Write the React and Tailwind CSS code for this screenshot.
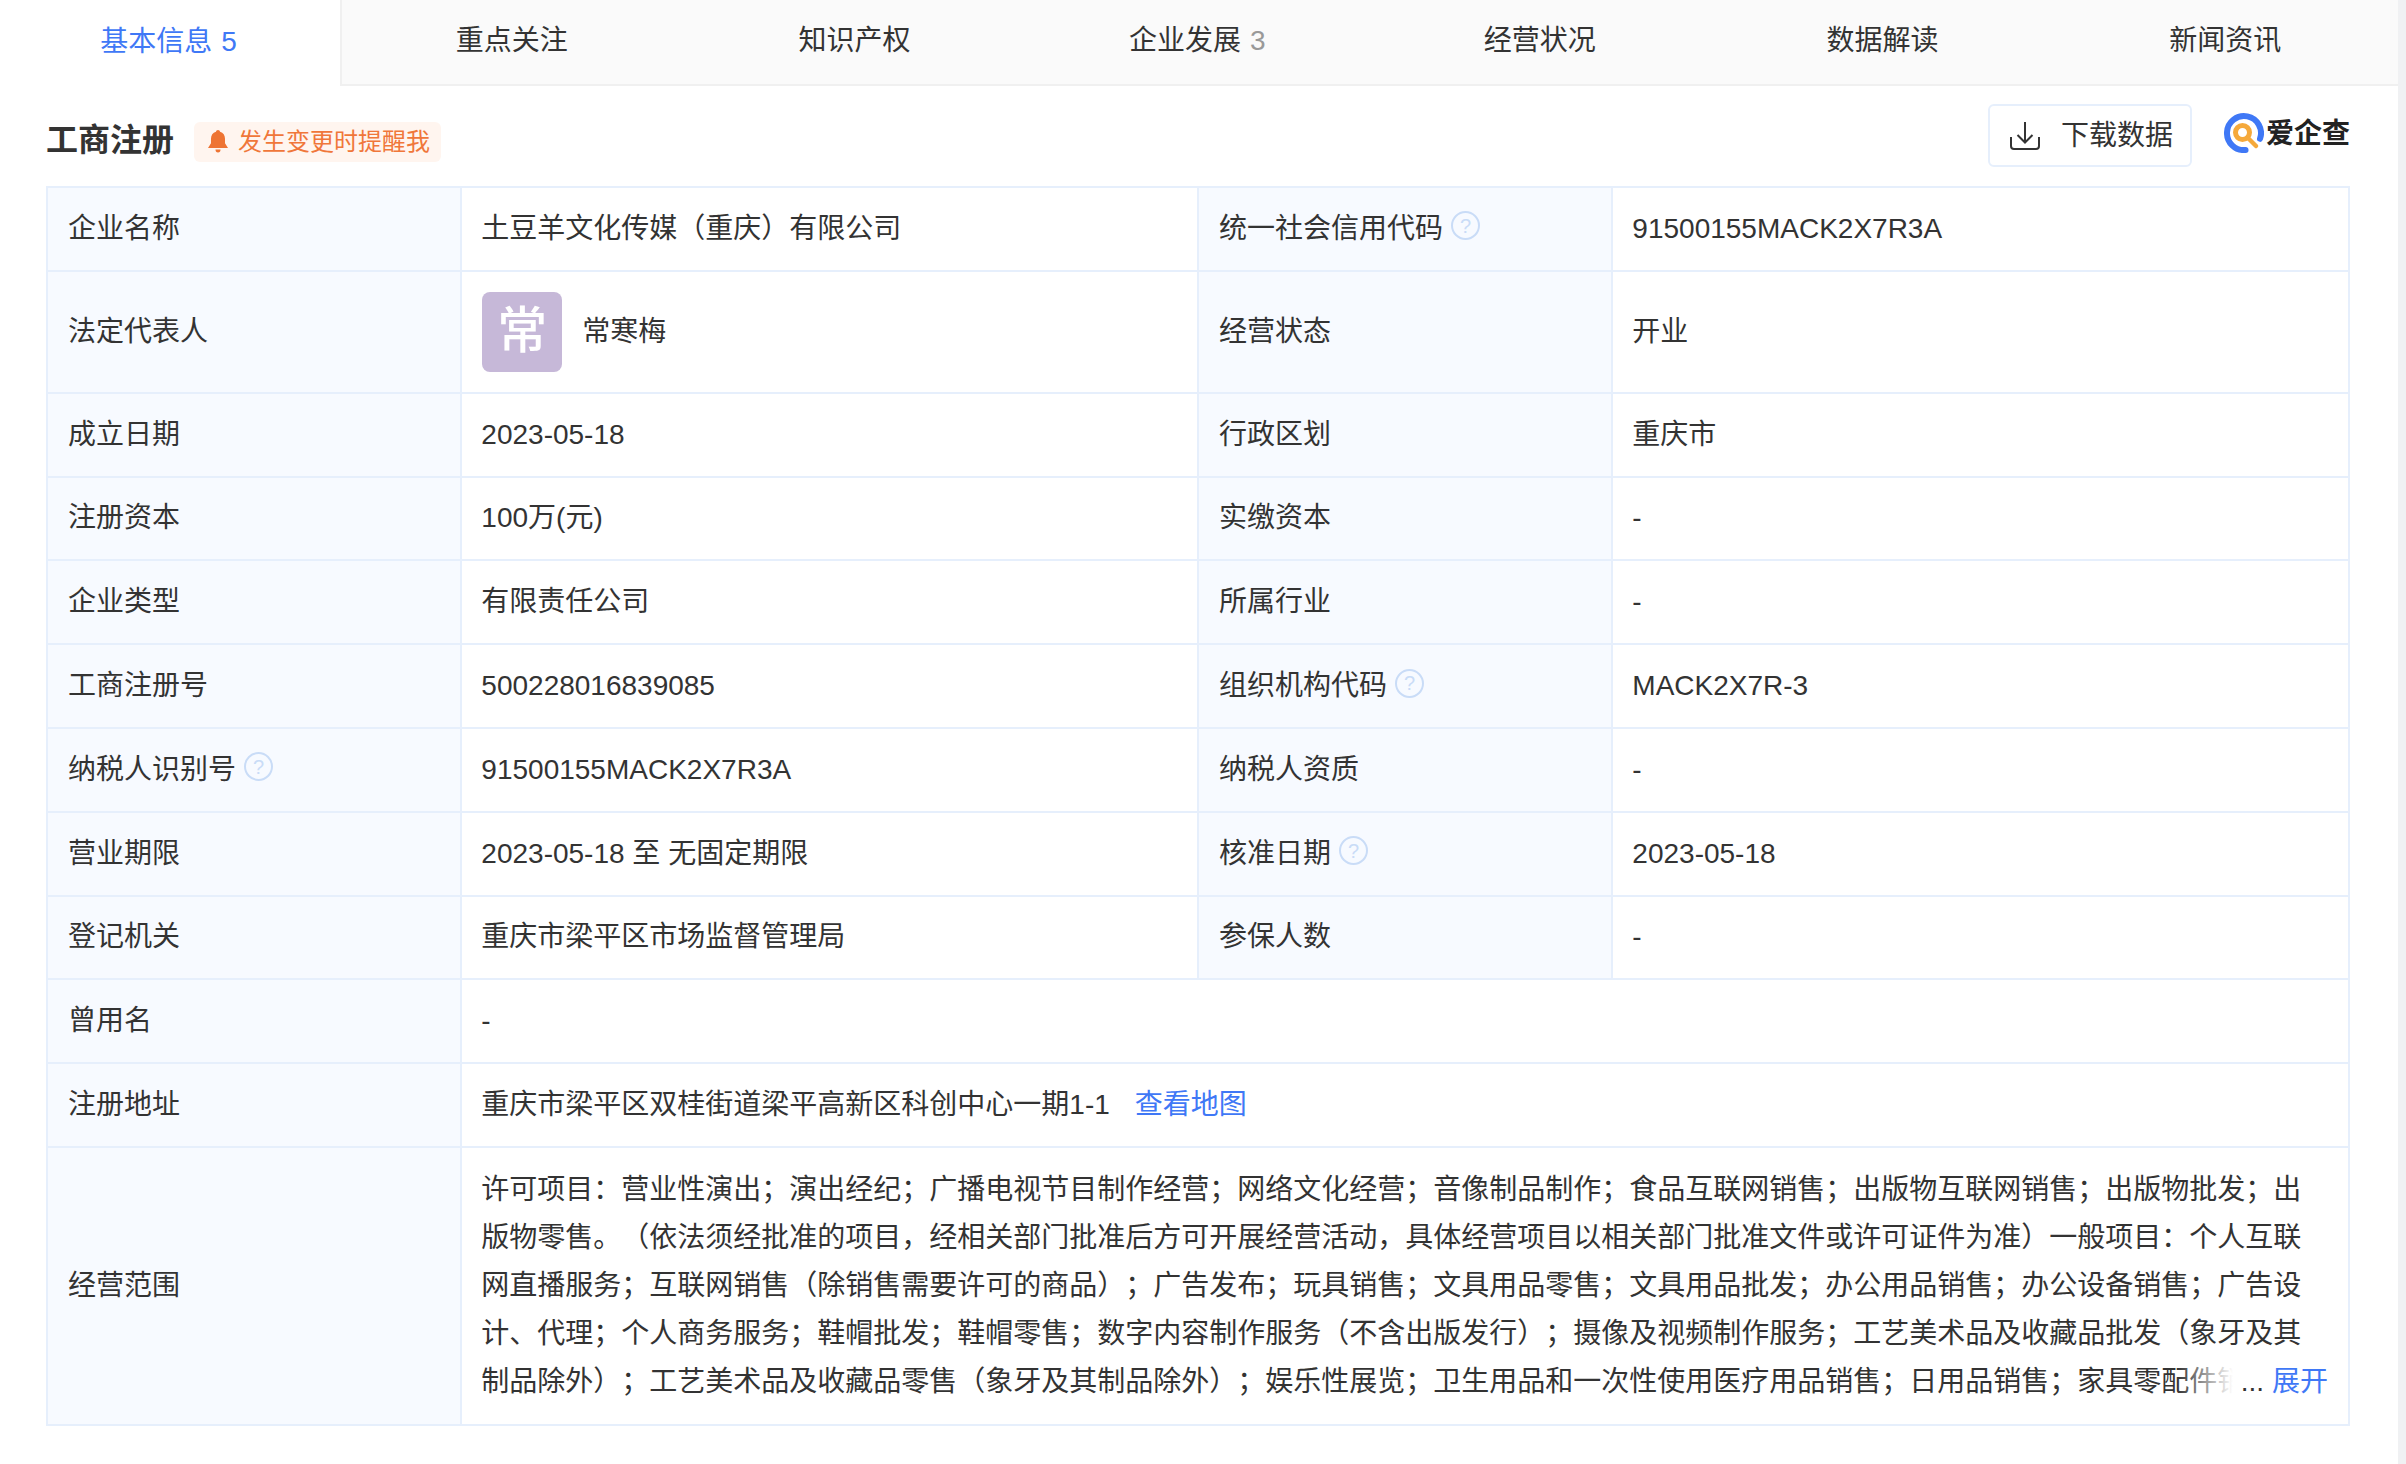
const TABS = [
  { name: '基本信息', count: '5', active: true },
  { name: '重点关注' },
  { name: '知识产权' },
  { name: '企业发展', count: '3' },
  { name: '经营状况' },
  { name: '数据解读' },
  { name: '新闻资讯' },
];

const SCOPE = '许可项目：营业性演出；演出经纪；广播电视节目制作经营；网络文化经营；音像制品制作；食品互联网销售；出版物互联网销售；出版物批发；出版物零售。（依法须经批准的项目，经相关部门批准后方可开展经营活动，具体经营项目以相关部门批准文件或许可证件为准）一般项目：个人互联网直播服务；互联网销售（除销售需要许可的商品）；广告发布；玩具销售；文具用品零售；文具用品批发；办公用品销售；办公设备销售；广告设计、代理；个人商务服务；鞋帽批发；鞋帽零售；数字内容制作服务（不含出版发行）；摄像及视频制作服务；工艺美术品及收藏品批发（象牙及其制品除外）；工艺美术品及收藏品零售（象牙及其制品除外）；娱乐性展览；卫生用品和一次性使用医疗用品销售；日用品销售；家具零配件销售；家居用品销售；厨具卫具及日用杂品批发';

function Help() {
  return (
    <span className="ml-[8px] inline-flex h-[29px] w-[29px] items-center justify-center rounded-full border-2 border-[#c9dcf7] align-[5px] text-[20px] leading-none text-[#c9dcf7]">?</span>
  );
}

function Label({ children, help }) {
  return (
    <td className="border-2 border-[#e6effc] bg-[#f7faff] px-[20px] align-middle">
      {children}
      {help && <Help />}
    </td>
  );
}

function Value({ children, span }) {
  return (
    <td colSpan={span} className="border-2 border-[#e6effc] bg-white pl-[19px] pr-[20px] align-middle">
      {children}
    </td>
  );
}

function Row({ a, b, c, d, helpA, helpC, tall }) {
  return (
    <tr className={tall ? 'h-[122px]' : 'h-[83.8px]'}>
      <Label help={helpA}>{a}</Label>
      <Value>{b}</Value>
      <Label help={helpC}>{c}</Label>
      <Value>{d}</Value>
    </tr>
  );
}

function Logo() {
  return (
    <svg viewBox="0 0 40 40" className="h-[40px] w-[40px]">
      <path d="M36 25.800A17 17 0 1 0 21.500 37" fill="none" stroke="#3f78f6" strokeWidth="6" strokeLinecap="round" />
      <circle cx="18.500" cy="19.500" r="7" fill="none" stroke="#f5a93b" strokeWidth="5" />
      <path d="M24 25l8 8" stroke="#f5a93b" strokeWidth="4.500" strokeLinecap="round" />
    </svg>
  );
}

export default function App() {
  return (
    <div className="flex min-h-[1464px] bg-white font-['Liberation_Sans','Noto_Sans_CJK_SC',sans-serif] text-[28px] text-[#333] [text-spacing-trim:space-all]">
      <div className="min-w-0 flex-1">
        <div className="flex h-[86px] border-b-2 border-[#f0f0f0] bg-[#fafafa]">
          {TABS.map(t => (
            <div
              key={t.name}
              className={`flex items-center justify-center pb-[2px] pr-[3px] ${t.active ? '-mb-[2px] h-[86px] shrink-0 basis-[342px] border-r-2 border-[#f0f0f0] bg-white text-[#3f78f6]' : 'flex-1'}`}
            >
              {t.name}
              {t.count && <span className={`ml-[9px] ${t.active ? '' : 'text-[#999]'}`}>{t.count}</span>}
            </div>
          ))}
        </div>

        <div className="pl-[46px] pr-[48px]">
          <div className="flex h-[100px] items-center justify-between">
            <div className="flex items-center pt-[8px]">
              <h2 className="text-[32px] font-bold">工商注册</h2>
              <div className="ml-[20px] mt-[3px] flex h-[40px] items-center rounded-[6px] bg-[#fff5ef] pl-[14px] pr-[11px] text-[24px] text-[#f0773a]">
                <svg viewBox="0 0 20 23" className="mr-[10px] h-[23px] w-[20px]" fill="#ee7433">
                  <path d="M10 0c1.100 0 1.900.8 2 1.800 3.300.9 5 3.700 5 7v4.400l3 4.800H0l3-4.800V8.800c0-3.300 1.700-6.100 5-7C8.100.8 8.900 0 10 0z" />
                  <path d="M7.500 19.500h5a2.500 3 0 0 1-5 0z" />
                </svg>
                发生变更时提醒我
              </div>
            </div>
            <div className="flex items-center pb-[1px]">
              <button className="flex h-[63px] w-[204px] items-center rounded-[6px] border-2 border-[#e6effc] pl-[20px] text-[#333]">
                <svg viewBox="0 0 30 28" className="mr-[21px] h-[28px] w-[30px]" fill="none" stroke="#333" strokeWidth="2">
                  <path d="M1 15v9a3 3 0 0 0 3 3h22a3 3 0 0 0 3-3v-9" />
                  <path d="M15 0v20M7.500 13l7.500 7.500 7.500-7.500" />
                </svg>
                下载数据
              </button>
              <div className="ml-[32px] flex items-center pb-[6px]">
                <Logo />
                <span className="ml-[2px] mt-[3px] text-[28px] font-bold text-[#222]">爱企查</span>
              </div>
            </div>
          </div>

          <table className="w-full table-fixed border-collapse">
            <colgroup>
              <col className="w-[18%]" />
              <col className="w-[32%]" />
              <col className="w-[18%]" />
              <col className="w-[32%]" />
            </colgroup>
            <tbody>
              <Row a="企业名称" b="土豆羊文化传媒（重庆）有限公司" c="统一社会信用代码" helpC d="91500155MACK2X7R3A" />
              <Row
                tall
                a="法定代表人"
                b={
                  <div className="ml-[1px] flex items-center">
                    <div className="flex h-[80px] w-[80px] items-center justify-center rounded-[8px] bg-[#c6b8d8] text-[50px] font-medium text-white">常</div>
                    <span className="ml-[20px]">常寒梅</span>
                  </div>
                }
                c="经营状态"
                d="开业"
              />
              <Row a="成立日期" b="2023-05-18" c="行政区划" d="重庆市" />
              <Row a="注册资本" b="100万(元)" c="实缴资本" d="-" />
              <Row a="企业类型" b="有限责任公司" c="所属行业" d="-" />
              <Row a="工商注册号" b="500228016839085" c="组织机构代码" helpC d="MACK2X7R-3" />
              <Row a="纳税人识别号" helpA b="91500155MACK2X7R3A" c="纳税人资质" d="-" />
              <Row a="营业期限" b="2023-05-18 至 无固定期限" c="核准日期" helpC d="2023-05-18" />
              <Row a="登记机关" b="重庆市梁平区市场监督管理局" c="参保人数" d="-" />
              <tr className="h-[83.8px]">
                <Label>曾用名</Label>
                <Value span={3}>-</Value>
              </tr>
              <tr className="h-[83.8px]">
                <Label>注册地址</Label>
                <Value span={3}>
                  重庆市梁平区双桂街道梁平高新区科创中心一期1-1
                  <span className="ml-[25px] text-[#3f78f6]">查看地图</span>
                </Value>
              </tr>
              <tr className="h-[278px]">
                <Label>经营范围</Label>
                <Value span={3}>
                  <div className="relative h-[240px] overflow-hidden leading-[48px]">
                    {SCOPE}
                    <div className="absolute bottom-0 right-0 flex h-[48px] items-center bg-white">
                      <div className="absolute right-full top-0 h-[48px] w-[56px] bg-gradient-to-r from-transparent to-white" />
                      <span className="pl-[8px]">...</span>
                      <span className="ml-[8px] text-[#3f78f6]">展开</span>
                    </div>
                  </div>
                </Value>
              </tr>
            </tbody>
          </table>
        </div>
      </div>
      <div className="w-[8px] shrink-0 bg-[#f0f1f3]" />
    </div>
  );
}
